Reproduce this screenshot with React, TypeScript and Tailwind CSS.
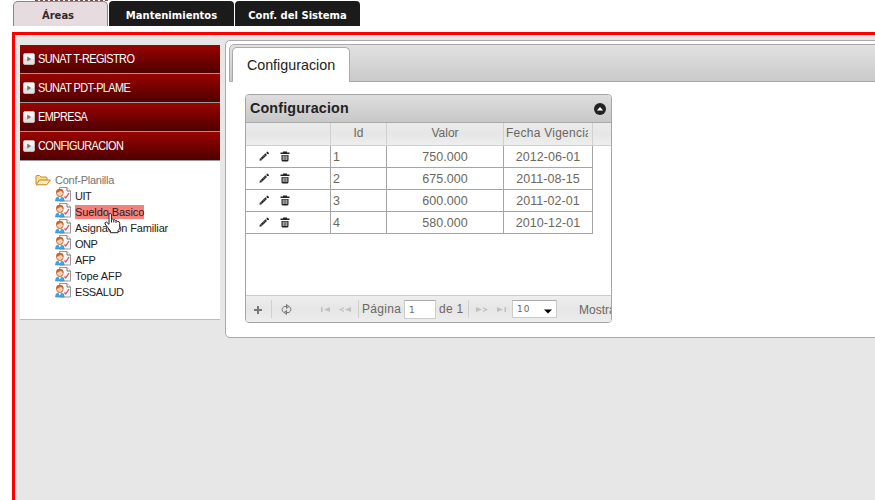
import React from "react";

const menu = ["SUNAT T-REGISTRO", "SUNAT PDT-PLAME", "EMPRESA", "CONFIGURACION"];
const leaves: [string, string][] = [
  ["UIT", "tracking-[-0.5px]"],
  ["Sueldo Basico", "bg-[#f8807c] tracking-[-0.08px]"],
  ["Asignación Familiar", "tracking-[-0.15px]"],
  ["ONP", "tracking-[-0.5px]"],
  ["AFP", "tracking-[-0.3px]"],
  ["Tope AFP", "tracking-[-0.1px]"],
  ["ESSALUD", "tracking-[-0.4px]"],
];
const rows = [
  ["1", "750.000", "2012-06-01"],
  ["2", "675.000", "2011-08-15"],
  ["3", "600.000", "2011-02-01"],
  ["4", "580.000", "2010-12-01"],
];

function MenuArrow() {
  return (
    <svg width="12" height="12" viewBox="0 0 12 12" className="ml-[3px] shrink-0">
      <rect x=".5" y=".5" width="11" height="11" rx="1.5" fill="#e3e1e1" stroke="#c5b3b3" />
      <rect x="1" y="1" width="10" height="5" fill="#f6f5f5" />
      <path d="M4.2 3.5v5L8.2 6z" fill="#777" />
    </svg>
  );
}

function FolderIcon() {
  return (
    <svg width="16" height="16" viewBox="0 0 16 16" className="shrink-0">
      <path d="M1 12V4.500q0-1 1-1h2.500l1.500 1.500h5q1 0 1 1v2" fill="#f9dd8b" stroke="#c58d32" />
      <path d="M1.200 12.800L4.500 8H15.300L11.800 12.800Z" fill="#fdebb5" stroke="#bd8426" strokeLinejoin="round" />
    </svg>
  );
}

function PersonIcon() {
  return (
    <svg width="16" height="15" viewBox="0 0 16 15" className="shrink-0">
      <path d="M4.500 .5h7.500l3.500 3.500v10H4.500z" fill="#f6f6f6" stroke="#999" />
      <path d="M12 .5V4h3.500" fill="#fff" stroke="#777" />
      <path d="M9.500 9.500l1.200 1.500L14 6" fill="none" stroke="#d8505c" strokeWidth="1.300" />
      <path d="M.5 14q0-4 3-4.300h2.500q3.200.3 3.200 4.300z" fill="#4ba3dc" stroke="#3b84b5" strokeWidth=".6" />
      <path d="M3.300 9.800l1.500 2.700 1.500-2.700z" fill="#fff" />
      <circle cx="4.800" cy="6" r="3.400" fill="#fbd0a9" stroke="#a65a32" strokeWidth=".7" />
      <path d="M1.200 6Q.8 1.800 4.800 1.800T8.500 6Q7.700 4.300 5.500 4 3 5.500 1.200 6z" fill="#c46735" />
    </svg>
  );
}

function Pencil() {
  return (
    <svg width="11" height="11" viewBox="0 0 11 11">
      <path d="M.5 9.800l.4-2.500 2 2z" fill="#222" />
      <path d="M2 8.300L7.200 3.100" stroke="#222" strokeWidth="2.200" />
      <path d="M2.600 7.700L7 3.300" stroke="#bbb" strokeWidth=".7" strokeDasharray="1 1" />
      <path d="M7.700 .9L9.700 2.900M7.800 2.600L9.300 1.100" stroke="#222" strokeWidth="1.300" />
    </svg>
  );
}

function Trash() {
  return (
    <svg width="10" height="11" viewBox="0 0 10 11">
      <path d="M3 .500h4v1h2.500v1.500H.5v-1.500H3z" fill="#222" />
      <path d="M1.500 4h7v5q0 1.500-1.500 1.500h-4Q1.500 10.500 1.500 9z" fill="#222" />
      <path d="M3.200 4.500v4.500M5 4.500v4.500M6.800 4.500v4.500" stroke="#eee" strokeWidth=".9" />
    </svg>
  );
}

function Cursor() {
  return (
    <svg width="17" height="22" viewBox="0 0 17 21" className="absolute left-[104px] top-[212px]">
      <path
        d="M5 1.500Q6.200 .3 7.400 1.700V7Q8.400 6 9.400 7.300 10.600 6.600 11.500 8 12.700 7.500 13.700 9 15.700 8.700 15.700 11V15Q15.300 17 14 18V20.200H6.500V18.500L3.700 15 1 11.500Q.500 9.500 2.500 9.600L5 11.800Z"
        fill="#fff"
        stroke="#222"
      />
      <path d="M7.500 7v3M9.800 7.500v2.500M12 8.500v2" stroke="#222" />
    </svg>
  );
}

function Separator() {
  return <div className="h-[18px] w-px shrink-0 bg-[#d0d0d0]" />;
}

export default function App() {
  return (
    <div className="relative h-[500px] w-[875px] overflow-hidden bg-white font-['Liberation_Sans',Arial,sans-serif]">
      <div className="flex h-8 items-start gap-px pl-[13px] pt-px font-['DejaVu_Sans',Verdana,sans-serif] text-[10px] font-bold text-white">
        <div className="flex h-[25px] w-[95px] items-center justify-center rounded-t-[5px] border border-b-0 border-[#987f80] bg-[#e6dcdf] pr-[5px] pt-[3px] text-[#33272b]">Áreas</div>
        <div className="flex h-[25px] w-[125px] items-center justify-center rounded-t-[4px] bg-[#1b1b1b] pt-[3px]">Mantenimientos</div>
        <div className="flex h-[25px] w-[125px] items-center justify-center rounded-t-[4px] bg-[#1b1b1b] pt-[3px]">Conf. del Sistema</div>
      </div>
      <div className="absolute left-[35px] top-0 h-0 w-[73px] border-t border-dashed border-[#785052]" />

      <div className="ml-3 flex h-[468px] items-start border-l-[3px] border-t-[3px] border-[#fe0000] bg-[#e7e7e7] pl-[5px]">
        <aside className="mt-[10px] w-[200px] shrink-0">
          {menu.map((m) => (
            <div key={m} className="flex h-[29px] items-center gap-[3px] border-b border-[#999] bg-linear-to-b from-[#990500] to-[#4f0000] text-[12px] tracking-[-0.6px] text-white">
              <MenuArrow />
              <span className="origin-left scale-x-[0.905]">{m}</span>
            </div>
          ))}
          <div className="h-[159px] border-b border-[#bdbdbd] bg-white pl-[15px] pt-[11px] text-[11px] text-[#222]">
            <div className="flex h-[15px] items-center gap-1 text-[#77736c]">
              <FolderIcon />
              <span className="leading-[14px] tracking-[-0.25px]">Conf-Planilla</span>
            </div>
            {leaves.map(([name, style]) => (
              <div key={name} className="flex h-4 items-start gap-1 pl-5">
                <PersonIcon />
                <span className={"mt-[2px] whitespace-nowrap leading-[14px] " + style}>{name}</span>
              </div>
            ))}
          </div>
        </aside>

        <main className="ml-[5px] mt-[5px] h-[298px] w-[660px] shrink-0 rounded-[5px] border border-[#aaa] bg-white p-[3px]">
          <div className="flex h-[38px] items-end rounded-tl-[5px] border border-[#aaa] bg-linear-to-b from-[#e2e2e2] to-[#cacaca] pl-[2px]">
            <div className="-mb-px flex h-[35px] w-[118px] items-center justify-center rounded-t-[5px] border border-b-0 border-[#aaa] bg-white pt-px text-[14.3px] text-[#222]">Configuracion</div>
          </div>

          <section className="ml-4 mt-3 flex h-[229px] w-[367px] flex-col overflow-hidden rounded-[4px] border border-[#a5a5a5] bg-white text-[13px] text-[#6c675e]">
            <header className="flex h-[28px] shrink-0 items-center justify-between border-b border-[#aaa] bg-linear-to-b from-[#dedede] to-[#c8c8c8] pl-1 pr-[5px] text-[14.3px] font-bold text-[#222]">
              <span className="tracking-[0.15px]">Configuracion</span>
              <svg width="12" height="12" viewBox="0 0 12 12">
                <circle cx="6" cy="6" r="6" fill="#222" />
                <path d="M2.800 7.500L6 4l3.200 3.500z" fill="#fff" />
              </svg>
            </header>
            <div className="flex h-[23px] shrink-0 border-b border-[#d0d0d0] bg-linear-to-b from-[#ececec] via-[#e6e6e6] to-[#eee] text-center text-[12px] leading-[20px]">
              <div className="w-[85px] border-r border-[#d0d0d0]" />
              <div className="w-[56px] border-r border-[#d0d0d0]">Id</div>
              <div className="w-[117px] border-r border-[#d0d0d0]">Valor</div>
              <div className="w-[89px] overflow-hidden whitespace-nowrap border-r border-[#d0d0d0] px-[2px] text-left tracking-[0.25px]">
                <div className="w-[82px] overflow-hidden">Fecha Vigencia</div>
              </div>
            </div>
            {rows.map(([id, value, date]) => (
              <div key={id} className="flex h-[22px] w-[347px] shrink-0 border-b border-[#a5a5a5] text-center text-[12.500px] leading-[22px] tracking-[0.05px]">
                <div className="flex w-[85px] items-center gap-[10px] border-r border-[#a5a5a5] pl-[13px]">
                  <Pencil />
                  <Trash />
                </div>
                <div className="w-[56px] border-r border-[#a5a5a5] pl-[2px] text-left">{id}</div>
                <div className="w-[117px] border-r border-[#a5a5a5]">{value}</div>
                <div className="w-[89px] border-r border-[#a5a5a5]">{date}</div>
              </div>
            ))}
            <footer className="mt-auto flex h-[27px] shrink-0 items-center whitespace-nowrap border-t border-[#ccc] bg-linear-to-b from-[#eee] via-[#e6e6e6] to-[#ededed] text-[12px]">
              <svg width="8" height="8" viewBox="0 0 8 8" className="ml-2 mt-px shrink-0">
                <path d="M4 0v8M0 4h8" stroke="#777" strokeWidth="2" />
              </svg>
              <div className="w-[9px] shrink-0" />
              <Separator />
              <svg width="11" height="11" viewBox="0 0 11 11" className="ml-[9px] shrink-0" fill="none" stroke="#777" strokeWidth="1">
                <path d="M2.500 8.500Q-.5 5 3 2.500h3.500M5.500 .500v4L8 2.500z" />
                <path d="M8.500 2.500Q11.500 6 8 8.500H4.500M5.500 6.500v4L3 8.500z" />
              </svg>
              <svg width="9" height="5" viewBox="0 0 9 6" preserveAspectRatio="none" className="ml-[29px] mt-px shrink-0" fill="#c0c0c0">
                <path d="M0 0h1.500v6H0zM9 0v6L3 3z" />
              </svg>
              <svg width="12" height="5" viewBox="0 0 12 6" preserveAspectRatio="none" className="ml-[9px] mt-px shrink-0" fill="#c0c0c0">
                <path d="M5 0L0 3l5 3V4.500L2.500 3 5 1.500zM12 0v6L6 3z" />
              </svg>
              <div className="w-[7px] shrink-0" />
              <Separator />
              <span className="ml-[3px] w-[39px] shrink-0 tracking-[0.3px]">Página</span>
              <div className="ml-[3px] flex h-[19px] w-[32px] shrink-0 items-center border border-[#ccc] border-t-[#aaa] bg-white pl-1 pt-[3px] font-['DejaVu_Sans',sans-serif] text-[9px]">1</div>
              <span className="ml-[3px] w-[25px] shrink-0 tracking-[0.3px]">de 1</span>
              <div className="w-[4px] shrink-0" />
              <Separator />
              <svg width="12" height="5" viewBox="0 0 12 6" preserveAspectRatio="none" className="ml-[7px] mt-px shrink-0" fill="#c0c0c0">
                <path d="M0 0l6 3-6 3zM7 0l5 3-5 3V4.500L9.500 3 7 1.500z" />
              </svg>
              <svg width="9" height="5" viewBox="0 0 9 6" preserveAspectRatio="none" className="ml-[9px] mt-px shrink-0" fill="#c0c0c0">
                <path d="M0 0l6 3-6 3zM7.500 0H9v6H7.500z" />
              </svg>
              <div className="ml-[6px] flex h-[18px] w-[45px] shrink-0 items-center justify-between border border-[#ccc] border-t-[#aaa] bg-white pl-1 pr-1 font-['DejaVu_Sans',sans-serif] text-[9px] tracking-[1px]">
                <span className="mt-px">10</span>
                <svg width="8" height="5" viewBox="0 0 8 5" className="mt-1"><path d="M0 .500h8L4 4.500z" fill="#000" /></svg>
              </div>
              <span className="ml-[22px] pt-px">Mostrando 1 - 4 de 4</span>
            </footer>
          </section>
        </main>
      </div>
      <Cursor />
    </div>
  );
}
